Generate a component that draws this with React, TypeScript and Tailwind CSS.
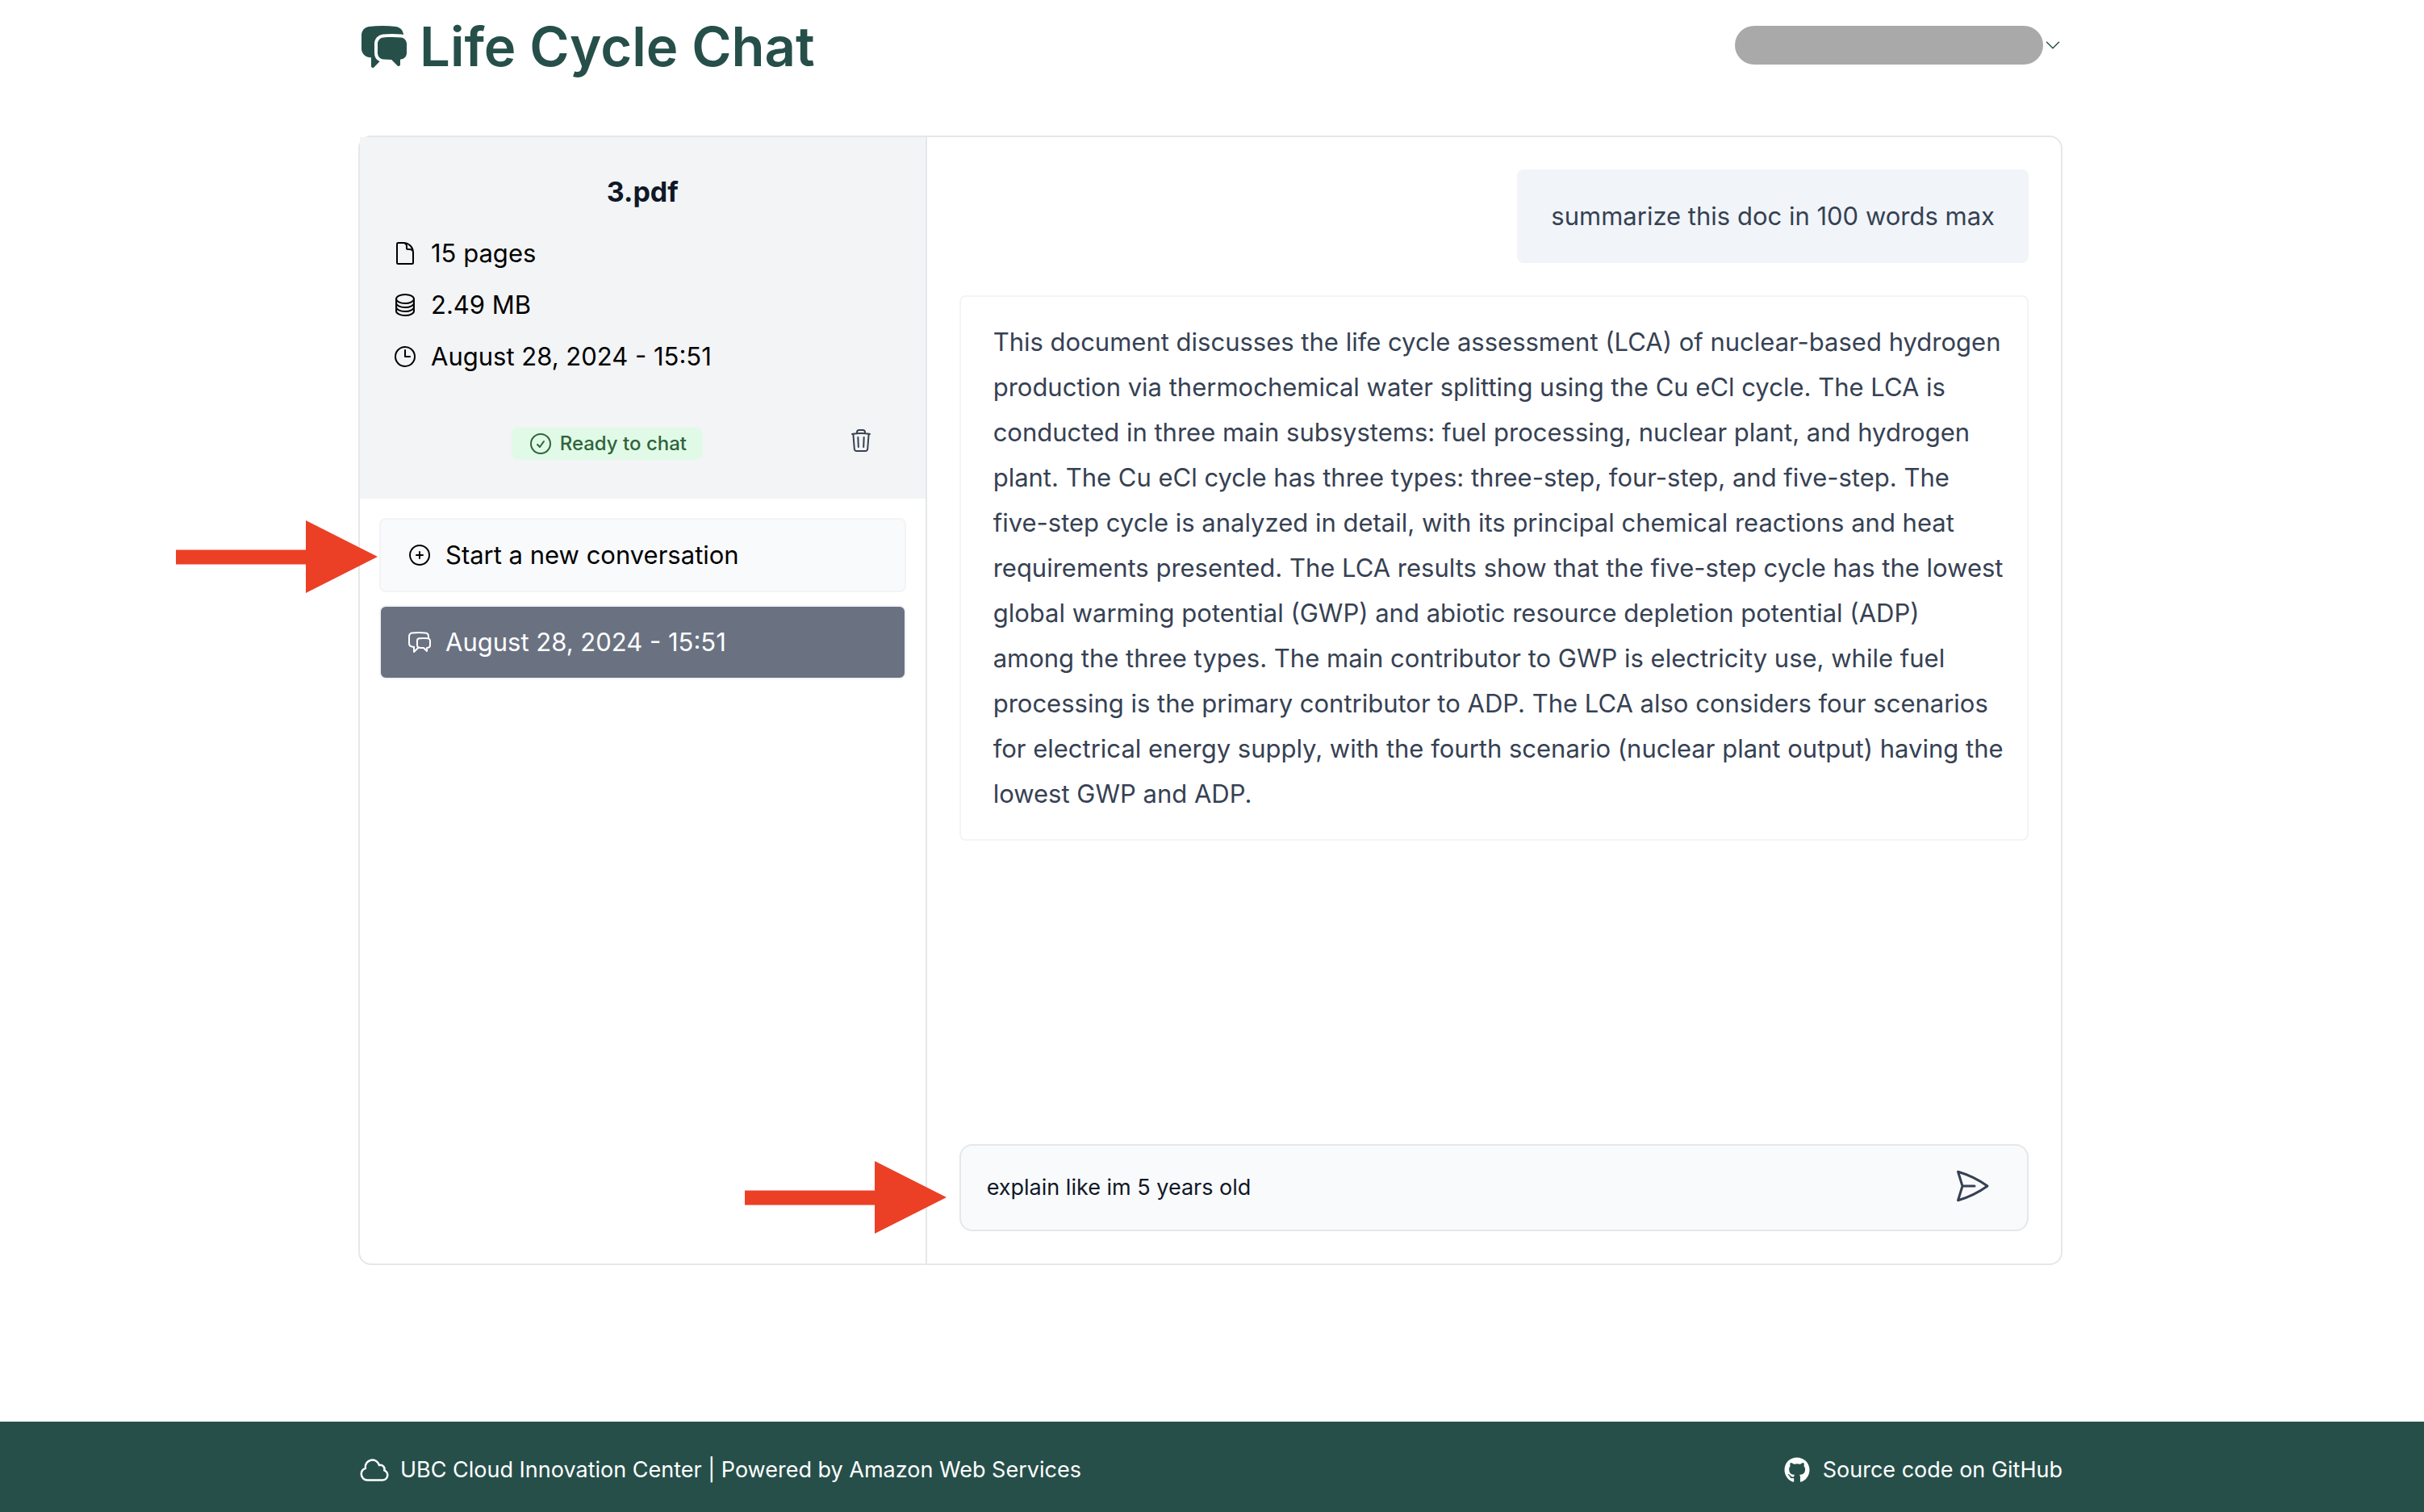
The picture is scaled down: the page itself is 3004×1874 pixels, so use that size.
import {
  HiChatBubbleLeftRight,
  HiOutlineChatBubbleLeftRight,
  HiOutlineCheckCircle,
  HiOutlineChevronDown,
  HiOutlineCircleStack,
  HiOutlineClock,
  HiOutlineCloud,
  HiOutlineDocument,
  HiOutlinePaperAirplane,
  HiOutlinePlusCircle,
  HiOutlineTrash,
} from "react-icons/hi2";
import { FaGithub } from "react-icons/fa";

const answer = `This document discusses the life cycle assessment (LCA) of nuclear-based hydrogen
production via thermochemical water splitting using the Cu eCl cycle. The LCA is
conducted in three main subsystems: fuel processing, nuclear plant, and hydrogen
plant. The Cu eCl cycle has three types: three-step, four-step, and five-step. The
five-step cycle is analyzed in detail, with its principal chemical reactions and heat
requirements presented. The LCA results show that the five-step cycle has the lowest
global warming potential (GWP) and abiotic resource depletion potential (ADP)
among the three types. The main contributor to GWP is electricity use, while fuel
processing is the primary contributor to ADP. The LCA also considers four scenarios
for electrical energy supply, with the fourth scenario (nuclear plant output) having the
lowest GWP and ADP.`;

function Arrow({ className }: { className: string }) {
  return (
    <svg aria-hidden="true" viewBox="0 0 250 90" className={className}>
      <path d="M0 36.500H161V0L250 45L161 90V54.500H0Z" fill="#eb4026" />
    </svg>
  );
}

export default function App() {
  return (
    <div className="flex min-h-screen flex-col bg-white font-[Inter,sans-serif] text-[31px] leading-[48px] text-black">
      <div className="flex flex-1 flex-col pr-1">
        <div className="mx-auto w-full max-w-[2112px]">
          <header className="flex items-start justify-between pt-2">
            <h1 className="flex items-center gap-3 text-[67px] leading-[100px] font-semibold text-[#264f4a]">
              <HiChatBubbleLeftRight className="size-16" aria-hidden="true" />
              Life Cycle Chat
            </h1>
            <button type="button" aria-label="Account menu" className="mt-6 flex items-center text-[#264f4a]">
              <span className="h-12 w-[382px] rounded-3xl bg-[#a9a9a9]" />
              <HiOutlineChevronDown className="size-6" />
            </button>
          </header>

          <main className="mt-[60px] flex min-h-[1400px] rounded-2xl border-2 border-gray-200">
            <aside className="relative w-1/3 shrink-0 border-r-2 border-gray-200">
              <section className="h-[448px] bg-gray-100 px-10 pt-11">
                <h2 className="text-center text-[34px] leading-[48px] font-bold text-gray-900">3.pdf</h2>
                <ul className="mt-7 flex flex-col gap-4">
                  <li className="flex items-center gap-4">
                    <HiOutlineDocument className="size-8" />15 pages
                  </li>
                  <li className="flex items-center gap-4">
                    <HiOutlineCircleStack className="size-8" />2.49 MB
                  </li>
                  <li className="flex items-center gap-4">
                    <HiOutlineClock className="size-8" />August 28, 2024 - 15:51
                  </li>
                </ul>
                <div className="mt-16 flex items-start">
                  <div className="flex flex-1 justify-center pr-8">
                    <span className="flex items-center gap-2 rounded-lg bg-[#e1fae7] px-5 text-[24px] leading-10 font-medium text-[#2f643b]">
                      <HiOutlineCheckCircle className="size-8" />
                      Ready to chat
                    </span>
                  </div>
                  <button type="button" aria-label="Delete document" className="mr-6 text-gray-700">
                    <HiOutlineTrash className="size-8" />
                  </button>
                </div>
              </section>
              <nav className="flex flex-col gap-4 p-6">
                <button type="button" className="flex items-center gap-4 rounded-lg border-2 border-gray-100 bg-gray-50 px-8 py-5">
                  <HiOutlinePlusCircle className="size-8" />
                  Start a new conversation
                </button>
                <button type="button" className="flex items-center gap-4 rounded-lg border-2 border-gray-100 bg-gray-500 px-8 py-5 text-white">
                  <HiOutlineChatBubbleLeftRight className="size-8" />
                  August 28, 2024 - 15:51
                </button>
              </nav>
              <Arrow className="absolute top-[475px] -left-[228px] w-[250px]" />
              <Arrow className="absolute -right-[26px] bottom-[37px] w-[250px]" />
            </aside>

            <section className="flex flex-1 flex-col p-10 text-gray-700">
              <p className="self-end rounded-lg border-2 border-gray-100 bg-slate-100 px-10 py-7 leading-[56px]">
                summarize this doc in 100 words max
              </p>
              <p className="mt-10 rounded-lg border-2 border-gray-100 py-7 pr-4 pl-10 leading-[56px] whitespace-pre-line">
                {answer}
              </p>
              <form
                className="mt-auto flex h-[108px] items-center rounded-2xl border-2 border-gray-200 bg-gray-50 pr-11 pl-8"
                onSubmit={(e) => e.preventDefault()}
              >
                <input
                  type="text"
                  aria-label="Message"
                  defaultValue="explain like im 5 years old"
                  className="flex-1 bg-transparent text-[27px] text-gray-900 outline-none"
                />
                <button type="submit" aria-label="Send" className="mb-1">
                  <HiOutlinePaperAirplane className="size-12" />
                </button>
              </form>
            </section>
          </main>
        </div>
      </div>

      <footer className="bg-[#264f4a] pt-10 pr-1 pb-8 text-[27px] leading-10 text-white">
        <div className="mx-auto flex max-w-[2112px] items-center justify-between">
          <a href="#ubc" className="flex items-center gap-3">
            <HiOutlineCloud className="size-10" />
            UBC Cloud Innovation Center | Powered by Amazon Web Services
          </a>
          <a href="#github" className="flex items-center gap-4">
            <FaGithub className="size-8" />
            Source code on GitHub
          </a>
        </div>
      </footer>
    </div>
  );
}
